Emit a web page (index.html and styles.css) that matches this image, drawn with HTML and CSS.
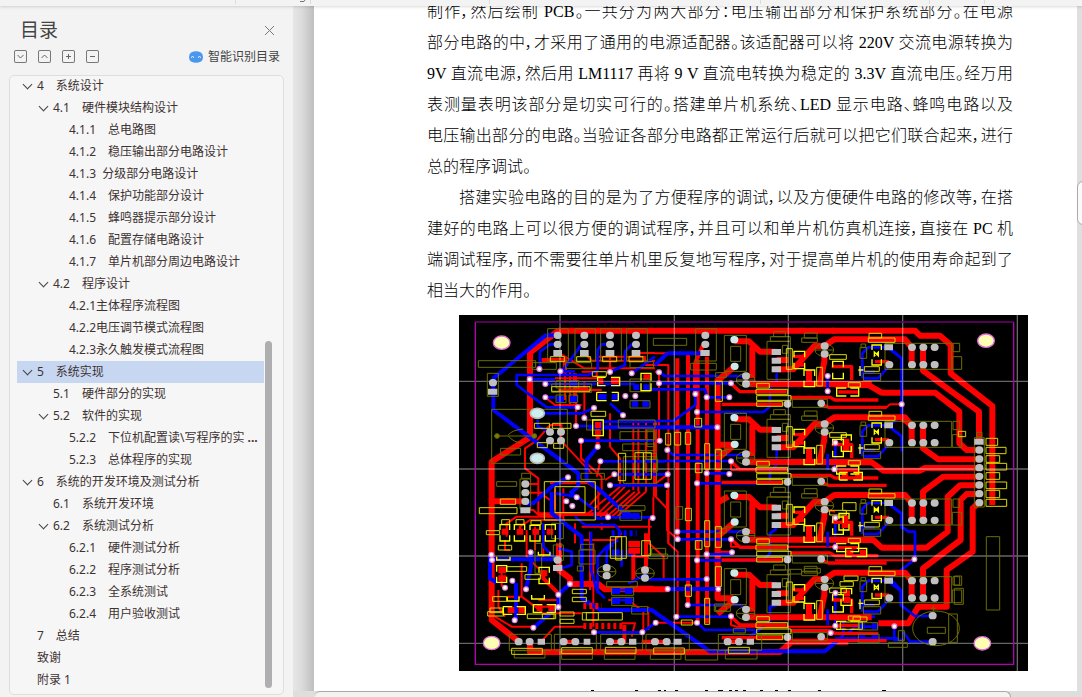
FILE: index.html
```html
<!DOCTYPE html>
<html lang="zh-CN">
<head>
    <meta charset="UTF-8">
    <meta name="viewport" content="width=device-width, initial-scale=1.0">
    <title>目录</title>
    <link rel="stylesheet" href="styles.css">
</head>
<body>

<div class="topbar">
    <svg width="1082" height="6" viewBox="0 0 1082 6">
        <path d="M235.5 0v4M310.5 0v4M489.5 0v4M760.5 0v4M929.5 0v4M984.5 0v4" stroke="#dcdcdc"/>
        <path d="M300 1.500h4l1-1.500" stroke="#777" fill="none"/>
    </svg>
</div>

<div class="workspace">
    <aside class="sidebar">
        <header class="sidebar-head">
            <h1>目录</h1>
            <button class="close" aria-label="关闭">
                <svg width="11" height="11" viewBox="0 0 11 11"><path d="M1 1l9 9M10 1l-9 9"/></svg>
            </button>
        </header>
        <div class="tools">
            <button aria-label="展开"><svg width="13" height="13" viewBox="0 0 13 13"><path d="M3.500 5l3 3 3-3"/></svg></button>
            <button aria-label="收起"><svg width="13" height="13" viewBox="0 0 13 13"><path d="M3.500 8l3-3 3 3"/></svg></button>
            <button aria-label="增加"><svg width="13" height="13" viewBox="0 0 13 13"><path d="M4 6.500h5M6.500 4v5"/></svg></button>
            <button aria-label="减少"><svg width="13" height="13" viewBox="0 0 13 13"><path d="M4 6.500h5"/></svg></button>
            <a class="smart" href="#">
                <svg width="14" height="12" viewBox="0 0 14 12">
                    <path d="M2 1.500Q7-1 12 1.500Q14 3 14 6T12 10.500Q7 13 2 10.500Q0 9 0 6T2 1.500z" fill="#4a97f0"/>
                    <path d="M2 6.500q1.500-2 3 0M9 6.500q1.500-2 3 0" stroke="#fff" fill="none"/>
                </svg>
                智能识别目录
            </a>
        </div>
        <nav class="tree">
            <ul>
                <li class="l1 open"><a href="#">4　系统设计</a></li>
                <li class="l2 open"><a href="#">4.1　硬件模块结构设计</a></li>
                <li class="l3"><a href="#">4.1.1　总电路图</a></li>
                <li class="l3"><a href="#">4.1.2　稳压输出部分电路设计</a></li>
                <li class="l3"><a href="#">4.1.3  分级部分电路设计</a></li>
                <li class="l3"><a href="#">4.1.4　保护功能部分设计</a></li>
                <li class="l3"><a href="#">4.1.5　蜂鸣器提示部分设计</a></li>
                <li class="l3"><a href="#">4.1.6　配置存储电路设计</a></li>
                <li class="l3"><a href="#">4.1.7　单片机部分周边电路设计</a></li>
                <li class="l2 open"><a href="#">4.2　程序设计</a></li>
                <li class="l3"><a href="#">4.2.1主体程序流程图</a></li>
                <li class="l3"><a href="#">4.2.2电压调节模式流程图</a></li>
                <li class="l3"><a href="#">4.2.3永久触发模式流程图</a></li>
                <li class="l1 open active"><a href="#">5　系统实现</a></li>
                <li class="l2"><a href="#">5.1　硬件部分的实现</a></li>
                <li class="l2 open"><a href="#">5.2　软件的实现</a></li>
                <li class="l3"><a href="#">5.2.2　下位机配置读\写程序的实 <b>...</b></a></li>
                <li class="l3"><a href="#">5.2.3　总体程序的实现</a></li>
                <li class="l1 open"><a href="#">6　系统的开发环境及测试分析</a></li>
                <li class="l2"><a href="#">6.1　系统开发环境</a></li>
                <li class="l2 open"><a href="#">6.2　系统测试分析</a></li>
                <li class="l3"><a href="#">6.2.1　硬件测试分析</a></li>
                <li class="l3"><a href="#">6.2.2　程序测试分析</a></li>
                <li class="l3"><a href="#">6.2.3　全系统测试</a></li>
                <li class="l3"><a href="#">6.2.4　用户验收测试</a></li>
                <li class="l1"><a href="#">7　总结</a></li>
                <li class="l1"><a href="#">致谢</a></li>
                <li class="l1"><a href="#">附录 1</a></li>
            </ul>
            <div class="scrollbar"></div>
        </nav>
    </aside>

    <div class="viewer">
        <div class="canvas">
            <div class="gutter"></div>
            <main class="page">
                <p>
                    <span>制作，然后绘制 PCB。一共分为两大部分：电压输出部分和保护系统部分。在电源</span>
                    <span>部分电路的中，才采用了通用的电源适配器。该适配器可以将 220V 交流电源转换为</span>
                    <span>9V 直流电源，然后用 LM1117 再将 9 V 直流电转换为稳定的 3.3V 直流电压。经万用</span>
                    <span>表测量表明该部分是切实可行的。搭建单片机系统、LED 显示电路、蜂鸣电路以及</span>
                    <span>电压输出部分的电路。当验证各部分电路都正常运行后就可以把它们联合起来，进行</span>
                    <span class="last">总的程序调试。</span>
                </p>
                <p>
                    <span class="indent">搭建实验电路的目的是为了方便程序的调试，以及方便硬件电路的修改等，在搭</span>
                    <span>建好的电路上可以很方便的调试程序，并且可以和单片机仿真机连接，直接在 PC 机</span>
                    <span>端调试程序，而不需要往单片机里反复地写程序，对于提高单片机的使用寿命起到了</span>
                    <span class="last">相当大的作用。</span>
                </p>

                <svg class="pcb" width="569" height="356" viewBox="12 15 1707 1068">
                    <defs>
                        <!-- one output channel, repeated four times down the board -->
                        <g id="channel">
                            <g class="red">
                                <path class="w18" d="M268 94H312L345 125H395M322 110V205M268 170L218 212M300 222H680M395 150H430M395 178H445L508 108H538L568 88H780L800 112M492 180V225M538 132V155L524 222M800 112V164M834 112V164"/>
                                <path class="w10" d="M260 222L285 245H425M230 283H415M436 262H555L570 270H700M528 282L550 292H725M445 140H480M450 165H480M690 155H732M560 170H620V210M580 246H640"/>
                            </g>
                            <path class="blue w8" d="M548 198V245M652 205V130L670 112H728L770 145V190M655 205H700L732 168M640 185H690"/>
                            <g class="olive">
                                <path d="M238 76h66v108h-66zM257 109h30v45h-30zM366 94h70v114h-70zM376 80h60v14h-60zM386 65h35v15h-35zM470 84h47v13h-47zM478 69h38v15h-38zM442 268h105v24h-105zM212 188h32v14h-32zM720 100h200v78h-200zM924 100h20v25h-20zM922 140h28v38h-28zM645 113h20v32h-20zM655 190h52v22h-52zM648 102h14v10h-14zM412 106h16v24h-16z"/>
                                <ellipse cx="302" cy="210" rx="28" ry="19"/>
                                <ellipse cx="538" cy="120" rx="28" ry="19"/>
                                <path d="M274 210h56M510 120h56"/>
                            </g>
                            <path class="yellow" d="M424 116h18v62h-18zM515 172h17v56h-17zM335 220h38v14h-38zM333 238h95v15h-95zM335 257h103v14h-103zM335 275h78v14h-78zM670 84h80v13h-80zM672 70h38v14h-38zM610 218h36v13h-36zM554 134h50v14h-50zM658 170h45v14h-45z"/>
                            <path class="yellow bold" d="M447 142v-18h32v18M447 158v18h32v-18M477 198v-18h32v18M477 212v18h32v-18M563 172v-18h32v18M563 188v18h32v-18M604 234h-29v24h29M616 234h25v24h-25M681 120v-15h28v15M681 148v17h28v-17M688 126l12 12v-12l-12 12zM645 168v30M640 180h15"/>
                            <path class="pad" d="M302 198h2M302 222h2M427 282h1M528 280h1M538 108h2M538 132h2M732 164h2M800 112h2M834 112h2M868 112h2M800 164h2M834 164h2M868 164h2"/>
                            <path class="sq" d="M380 126h28M380 152h28M380 178h28M718 112h26"/>
                            <path class="pad ice" d="M267 89h2M268 169h2"/>
                        </g>
                        <path id="vias" d="M253 177h.1M316 184h.1M224 208h.1M271 222h.1M271 262h.1M368 292h.1M417 294h.1M388 324h.1M363 348h.1M504 316h.1M465 186h.1M530 190h.1M511 258h.1M541 258h.1M378 392h.1M428 410h.1M436 454h.1M478 493h.1M465 526h.1M339 502h.1M365 562h.1
                            M612 187h.1M612 220h.1M828 220h.1M721 252h.1M755 262h.1M823 262h.1M726 306h.1M787 352h.1M614 392h.1M637 420h.1M828 454h.1M755 490h.1M823 492h.1M726 520h.1M638 493h.1M636 526h.1M1118 198h.1M1118 244h.1M1141 398h.1M1138 478h.1M1340 283h.1
                            M667 665h.1M668 688h.1M828 688h.1M755 733h.1M831 727h.1M726 751h.1M755 807h.1M638 837h.1M790 837h.1M698 885h.1M664 920h.1M828 919h.1M602 938h.1M726 938h.1M1141 624h.1M1141 711h.1M1141 849h.1M1141 947h.1M1127 969h.1M1378 748h.1M1318 949h.1
                            M109 734h.1M111 750h.1M227 727h.1M172 812h.1M150 833h.1M213 838h.1M345 822h.1M310 854h.1M310 891h.1M179 931h.1M235 953h.1M417 967h.1M562 967h.1M459 622h.1M593 624h.1M334 574h.1M352 588h.1"/>
                    </defs>

                    <rect x="12" y="15" width="1707" height="1068" fill="#000"/>

                    <!-- main supply traces -->
                    <g class="red w18">
                        <path d="M1140 62H310L225 128V382L110 455V930L188 992M225 995V1026H975L1010 995H1180"/>
                        <path d="M1130 62H1380L1395 77H1455L1487 105V190L1612 288V585M1404 164V182L1572 305V395M1140 225H1240L1280 248H1440L1513 305V400L1535 420H1572M1340 322L1370 346M1404 398V415L1450 448H1572M1140 457H1250L1285 482H1395L1410 474H1572M1572 500H1465L1404 545V620M1572 526H1515L1478 560V665L1415 713H1280L1255 690H1140"/>
                        <path d="M1572 552H1535L1517 570V690L1404 775V865M1572 578L1553 595V725L1475 780V890H1390L1360 940H1270"/>
                        <path d="M788 205V865H835M345 822H430L450 838H640M787 404H840M787 578L820 560M312 700V780L345 805V822M110 574H210"/>
                    </g>
                    <g class="red w12">
                        <path d="M667 145V690M699 135V885M728 150V938M756 140V940M720 160V250M720 160L745 103M573 670V780M535 730V810M428 340V410M508 945V995H465M325 995H360M560 995H635M820 995H850M265 780V805L310 850M600 330V560M260 150H330V190M360 190V280"/>
                    </g>
                    <g class="red w6">
                        <path d="M310 128L388 175H600M388 129L410 152H600M543 129H600M465 129V180M425 140H570V165H640V700M600 130H640M600 185L612 187V390M345 185V285M330 190V270M300 205H430M380 185H425V205M310 240H440M270 262L300 285H380M363 348V235H400M388 324V215M465 310V410L495 445V530M535 330V540M550 330V545M573 330V545M378 392V445L440 500V545L400 590M245 392L285 345H320L318 392L410 490M245 392L210 415V475L250 505V545L285 570M210 522H250V610H460M210 548H270M210 600H235L250 615H460"/>
                        <path d="M495 530L400 610M510 530L420 620M525 540L435 620M540 545L450 625M555 545L465 625M573 545L480 625M285 520H420M300 535V600M325 535V640M595 560V620M400 520L430 540V600M436 454L425 500M478 493L450 510M638 493L602 520V560L640 600V700L668 725V920M636 540V660L668 688M582 620V700L626 740V805"/>
                        <path d="M155 680V640L185 620H320M195 670V650L225 630H330M215 660V740L250 775M240 650V720M265 650V740M120 920L170 950H235M300 890H240M250 870H310M262 910H380M258 995L300 950H390M150 690V720H165M380 690H480L500 670M405 665V840M380 650H590M460 870H520L565 905V965M580 890V960M500 940H540L530 980M525 830H595M470 850L490 830M360 640V700M415 700V950M440 640V660M540 740H580M602 938H726M577 837H640M790 725H835M780 750H980M828 480H1000M828 690V710H1140M828 920V945L845 950H1160M828 455V480M200 760V860L260 905M140 780V830M130 840V890L150 920M155 860H200M1140 292H1295L1305 283H1340M1140 751H1375M1140 605L1120 600"/>
                    </g>

                    <!-- signal traces on the other side -->
                    <g class="blue w12">
                        <path d="M308 76H272L115 205V300L370 490V530L345 550M428 410L395 450V510L440 545L500 600L545 625M339 502L290 530L235 580H210M290 545V610L380 680V865L435 900H590L765 1024H1110L1155 985M105 735V805L125 818M105 748H305M228 727V770L213 837M183 820V930M235 953L310 890V853L345 822M638 837H790M400 352H787M637 130H745M600 165L637 130"/>
                    </g>
                    <g class="blue w8">
                        <path d="M308 103H285L255 125V177M388 103H380L350 145L320 184M465 103H440L428 120V180L400 195H185V225L275 292H368M543 103H530L510 125V165L465 186M530 190L600 140M224 208H300M271 222H540M316 184H360M248 310H380L417 294M248 330V350L285 365M363 348H440V335H600M378 392H600M465 280L504 316M436 454H630M478 493H638M465 526H636M271 262H300"/>
                        <path d="M612 187L630 198H870M612 220H828M570 238H750L756 262H823M721 252V285L655 333H570M965 190V215L945 235V290L925 306H726M637 420L655 435H870M570 453H828M965 420V465L945 485V520H726M755 490H823M667 665H870M667 688H828M756 733H830M965 655L945 670V730L925 751H726M570 808H755M699 885H855L870 897M663 920H828M727 938L750 960H900M965 885L945 890V935L885 980V995M1141 398V478M1141 624V711M1141 849V947"/>
                        <path d="M1300 112L1340 145V320L1300 346M1302 582L1340 610V650L1360 665H1380V748L1305 805L1337 840V885L1380 918H1433M1318 949V990H1345M1345 965L1365 995H1433M1140 985H1330M1140 1000L1165 975V920H1260M1130 969H1180L1200 950H1250"/>
                        <path d="M310 715L350 725V765L320 775M345 545L420 600V625H460M459 622H593M360 620L390 645H480L500 670M455 770V720L475 705M428 850V740L455 710L490 690M408 665V780L425 840L450 865M470 840H535M470 870H535M418 967H562L602 938M500 720V770M520 820L580 790M172 812L183 825M300 550L365 560M265 640V710L305 750M315 640V690"/>
                    </g>
                    <path class="blue w18" d="M305 267h22M345 267h22M430 260h25M470 260h22M530 282h20M562 282h20M500 618h24M532 618h22M470 843h25M510 843h22M470 873h25M510 873h22M535 232h18M565 232h18M470 727h24M515 727h20M1210 949h20M1250 949h20M1210 985h20M1250 985h20M345 220h20"/>
                    <path class="red w18" d="M140 665h20M185 665h20M232 665h20M275 665h20M130 780h24M130 805h24M158 900h20M190 900h20M245 894h18M280 894h18M468 213h24M430 213h15M565 202h20M420 345h18M420 370h18M255 790h22M520 702h35M520 722h35M1163 395h20M1163 415h20M1160 498h20M1200 498h20M1160 625h20M1160 645h20M1175 728h20M1215 728h20M1165 850h20M1165 870h20"/>
                    <path class="red w18" stroke-dasharray="9 9" d="M385 888H440M385 948H510"/>
                    <path class="blue w18" stroke-dasharray="9 9" d="M470 670H545"/>

                    <g transform="translate(570)">
                        <use href="#channel"/>
                        <use href="#channel" y="234"/>
                        <use href="#channel" y="467"/>
                        <use href="#channel" y="700"/>
                    </g>

                    <!-- grid and board outline -->
                    <path class="grid" d="M315 15V1083M658 15V1083M1000 15V1083M1343 15V1083M1687 15V1083M12 214H1719M12 477H1719M12 738H1719M12 1000H1719"/>
                    <path d="M61 36H1676" stroke="#700070" stroke-width="5"/>
                    <path d="M61 36V1063H1676V36" stroke="#b400b4" stroke-width="4" fill="none"/>

                    <!-- silkscreen -->
                    <g class="olive">
                        <path d="M278 56h62v97h-62zM360 56h62v97h-62zM437 56h62v97h-62zM515 56h62v97h-62zM70 152h172v20h-172zM97 190h33v69h-33zM110 298h227v162h-227zM137 415h60v20h-60zM195 507h32v90h-32zM125 515h60v14h-60zM200 490h27v15h-27zM232 158h72v20h-72zM332 158h78v18h-78zM290 222h120v25h-120zM303 212h68v22h-68zM303 255h30v23h-30zM342 255h26v23h-26zM525 272h60v22h-60zM395 330h50v30h-50zM525 155h70v18h-70zM378 490h70v18h-70zM490 330h110v24h-110zM495 365h105v24h-105zM503 402h97v20h-97zM505 440h100v80h-100zM525 207h60v38h-60zM595 85h100v21h-100zM722 56h62v97h-62zM707 160h77v20h-77zM576 360h20v50h-20zM573 430h32v18h-32zM570 448h38v35h-38z"/>
                        <path d="M490 587h80v14h-80zM495 605h65v26h-65zM372 720h48v42h-48zM377 703h38v15h-38zM367 768h18v15h-18zM470 832h66v24h-66zM470 862h66v24h-66zM455 815h92v16h-92zM530 890h48v22h-48zM290 640h35v46h-35zM295 705h30v46h-30zM240 700h20v90h-20zM163 973h126v48h-126zM178 1022h92v22h-92zM298 973h126v48h-126zM320 1018h92v30h-92zM437 973h126v48h-126zM448 1022h92v26h-92zM573 973h130v48h-130zM586 1022h92v26h-92zM790 973h130v48h-130zM811 1020h95v27h-95zM691 1020h97v30h-97zM663 590h20v38h-20zM590 715h42v20h-42zM580 732h58v14h-58zM778 882h48v22h-48zM998 778h42v14h-42zM1048 775h48v14h-48zM835 955h36v14h-36z"/>
                        <path d="M1594 680h40v220h-40zM1417 952h54v18h-54zM1481 912h26v85h-26zM1498 798h22v28h-22zM1498 835h27v48h-27zM1558 383h30v208h-30zM1210 938h58v22h-58zM1210 972h62v26h-62zM1300 997h57v15h-57zM1330 962h18v30h-18zM1565 367h16v14h-16z"/>
                        <ellipse cx="1443" cy="955" rx="70" ry="52"/>
                        <ellipse cx="455" cy="785" rx="28" ry="19"/>
                        <ellipse cx="570" cy="790" rx="28" ry="19"/>
                        <path d="M126 378h115M160 375q10-15 45-18M160 378q15 20 42 20M427 785h56M542 790h56M1427 895h16M1435 887v16"/>
                        <circle cx="126" cy="378" r="7" fill="#7c7c00"/>
                        <circle cx="238" cy="378" r="7" fill="#7c7c00"/>
                    </g>
                    <path class="yellow" d="M286 140h42v15h-42zM365 140h42v15h-42zM443 140h42v15h-42zM522 140h42v15h-42zM238 340h46v15h-46zM292 340h56v15h-56zM247 398h30v15h-30zM296 400h30v15h-30zM408 304h44v15h-44zM290 230h115v14h-115zM268 515h153v115h-153zM300 530h90v78h-90zM490 430h22v82h-22zM540 428h26v80h-26zM565 428h24v80h-24zM412 185h42v14h-42zM136 567h46v16h-46zM73 593h113v18h-113zM94 662h40v12h-40zM140 629h24v14h-24zM183 629h24v14h-24zM228 632h30v12h-30zM130 706h40v14h-40zM155 770h60v14h-60zM210 794h46v14h-46zM113 860h42v14h-42zM105 894h38v14h-38zM98 905h48v13h-48zM217 912h80v14h-80zM262 912h40v14h-40zM352 838h42v13h-42zM352 862h42v13h-42zM315 906h42v12h-42zM315 928h42v12h-42zM382 908h120v22h-120zM394 908h36v22h-36zM466 680h48v65h-48zM482 680h18v70h-18zM170 1015h92v18h-92zM320 1013h92v18h-92zM451 1012h92v18h-92zM596 1014h92v18h-92zM820 1012h63v18h-63zM560 692h26v45h-26z"/>
                    <path class="yellow" d="M719 325h21v26h-21zM632 370h15v35h-15zM659 367h18v38h-18zM691 367h16v36h-16zM749 401h15v77h-15zM781 418h18v60h-18zM781 214h21v60h-21zM721 460h20v28h-20zM691 595h18v37h-18zM749 632h15v78h-15zM781 650h18v62h-18zM721 692h20v26h-20zM781 770h18v60h-18zM691 825h18v34h-18zM749 865h15v78h-15zM679 930h33v15h-33zM1593 385h35v21h-35zM1593 412h60v19h-60zM1593 437h41v20h-41zM1593 460h62v20h-62zM1593 488h41v20h-41zM1593 516h62v20h-62zM1593 541h41v22h-41zM1593 568h62v21h-62zM1510 364h22v16h-22zM1194 921h42v13h-42zM1156 936h66v22h-66zM1167 798h42v14h-42zM1155 815h40v14h-40zM1163 578h40v24h-40z"/>
                    <path class="yellow bold" d="M428 213v-11h24M468 202h26v25h-26M428 216v11h24M425 247h30M425 272h30M425 247v25M490 247v25M470 247h20M470 272h20M413 355v-25h32v25M413 352v25h32v-25M558 212v-22h30v22M558 220v22h30v-22M135 660v-16h29v16M135 676v17h29v-17M178 660v-16h31v16M178 676v17h31v-17M225 660v-14h30v14M225 676v17h30v-17M271 660v-16h30v16M271 676v17h30v-17M125 785v-18h30v18M125 800v17h30v-17M252 788v-16h31v16M252 803v18h31v-18M172 890h-27v23h27M185 890h26v23h-26M262 884h-27v23h27M275 884h26v23h-26M125 740v10h40v-10M230 855v12h38v-12M157 860v13h35v-13M250 725v10h35v-10M1159 392v-17h30v17M1159 408v16h30v-16M1153 487h25M1153 510h25M1153 487v23M1195 487h27v23h-27M1152 628v-18h30v18M1152 642v18h30v-18M1190 715h-18v25h18M1205 715h30v25h-30M1158 853v-17h32v17M1158 868v18h32v-18"/>

                    <!-- pads, vias and mounting holes -->
                    <path class="pad" d="M307 76h2M307 103h2M387 76h2M387 103h2M464 76h2M464 103h2M542 76h2M542 103h2M750 76h2M750 103h2M113 218h2M284 366h2M317 366h2M284 392h2M317 392h2M210 522h2M210 548h2M210 574h2M307 750h2M454 773h2M454 797h2M569 780h2M569 804h2M190 995h2M223 995h2M325 995h2M360 995h2M464 995h2M498 995h2M599 995h2M634 995h2M817 995h2M851 995h2M1432 917h2M1432 995h2M1572 420h2M1572 447h2M1572 473h2M1572 499h2M1572 525h2M1572 551h2M1572 578h2"/>
                    <path class="sq" d="M295 129h26M375 129h26M452 129h26M530 129h26M736 129h28M99 245h28M196 601h30M294 774h28M248 995h22M386 995h20M522 995h22M656 995h24M875 995h22M1558 395h28"/>
                    <g fill="#cdeeee" stroke="#bbb" stroke-width="5">
                        <ellipse cx="247" cy="310" rx="21" ry="15"/>
                        <ellipse cx="247" cy="445" rx="21" ry="15"/>
                    </g>
                    <use href="#vias" class="via"/>
                    <use href="#vias" class="via-core"/>
                    <g fill="#ffffb4" stroke="#e070d8" stroke-width="4">
                        <ellipse cx="140" cy="98" rx="25" ry="20"/>
                        <ellipse cx="1593" cy="92" rx="25" ry="20"/>
                        <ellipse cx="110" cy="999" rx="25" ry="20"/>
                        <ellipse cx="1582" cy="1000" rx="25" ry="20"/>
                    </g>
                </svg>

                <!-- tops of the next line, cut off by the lower edge -->
                <svg class="cutoff" width="586" height="1" viewBox="0 0 586 1">
                    <path d="M164 .5h3M208 .5h3M231 .5h3M237 .5h2M248 .5h3M278 .5h3M291 .5h5M302 .5h3M308 .5h3M316 .5h3M333 .5h3M348 .5h3M361 .5h3M391 .5h3M455 .5h4" stroke="#000"/>
                </svg>
            </main>
            <div class="rail">
                <button class="handle" aria-label="展开侧栏"></button>
            </div>
        </div>
        <footer class="bottom"><div class="tab"></div></footer>
    </div>
</div>

</body>
</html>
```
FILE: styles.css
```css
* {
    box-sizing: border-box;
}

body {
    margin: 0;
    height: 100vh;
    display: flex;
    flex-direction: column;
    overflow: hidden;
    background-color: #f3f3f3;
    font-family: "Noto Sans", "Noto Sans CJK SC", sans-serif;
    font-size: 12px;
    color: #3d3332;
}

button {
    padding: 0;
    border: none;
    background: none;
    cursor: pointer;
}

a {
    color: inherit;
    text-decoration: none;
}

svg {
    display: block;
}

.topbar {
    height: 6px;
    flex: none;
    overflow: hidden;
    position: relative;
    z-index: 1;
    background-color: #f3f3f3;
    box-shadow: 0 1px 3px rgba(0, 0, 0, 0.15);
}

.workspace {
    flex: 1;
    min-height: 0;
    display: flex;
}

/* Sidebar */
.sidebar {
    width: 293px;
    flex: none;
    display: flex;
    flex-direction: column;
    padding: 10px 9px 2px;
}

.sidebar-head {
    display: flex;
    justify-content: space-between;
    align-items: center;
    height: 28px;
    padding: 0 9px 0 11px;
}

.sidebar-head h1 {
    margin: 0;
    font-size: 19px;
    line-height: 28px;
    font-weight: normal;
    color: #444;
}

.close svg {
    fill: none;
    stroke: #777;
}

.tools {
    display: flex;
    align-items: center;
    gap: 11px;
    height: 25px;
    padding: 0 4px 0 5px;
}

.tools button {
    width: 13px;
    height: 13px;
    border-radius: 2px;
    box-shadow: inset 0 0 0 1px #777;
}

.tools button svg {
    fill: none;
    stroke: #666;
}

.smart {
    display: flex;
    align-items: center;
    gap: 5px;
    margin-left: auto;
    line-height: 18px;
    color: #444;
}

.tree {
    flex: 1;
    min-height: 0;
    display: flex;
    margin-top: 6px;
    padding-left: 7px;
    border: 1px solid #dedede;
    border-radius: 5px;
    background-color: #f6f6f6;
}

.tree ul {
    width: 247px;
    margin: -1px 0 0;
    padding: 0;
    list-style: none;
}

.tree li {
    position: relative;
    height: 22px;
    line-height: 22px;
    white-space: pre;
}

.l1 {
    padding-left: 20px;
}

.l2 {
    padding-left: 36px;
}

.l3 {
    padding-left: 52px;
}

/* arrow in front of an open branch */
.open::before {
    content: "";
    position: absolute;
    top: 6px;
    left: 7px;
    width: 6px;
    height: 6px;
    border: solid #444;
    border-width: 0 1px 1px 0;
    transform: rotate(45deg);
}

.l2.open::before {
    left: 23px;
}

.active {
    background-color: #c7d7f1;
}

.scrollbar {
    width: 7px;
    margin: 265px 0 6px 1px;
    border-radius: 4px;
    background-color: #afafb1;
}

/* Document */
.viewer {
    flex: 1;
    min-width: 0;
    display: flex;
    flex-direction: column;
}

.canvas {
    flex: 1;
    min-height: 0;
    display: flex;
}

.gutter {
    width: 21px;
    flex: none;
    background: linear-gradient(to right, #e6e6e6, #dcdcdc 40%, #bebebe);
}

.page {
    flex: 1;
    min-width: 0;
    display: flex;
    flex-direction: column;
    overflow: hidden;
    padding: 0 64px 0 113px;
    background-color: #fff;
    color: #000;
    font-family: "Liberation Serif", "Noto Sans CJK SC Light", "Noto Sans CJK SC", serif;
    font-size: 16px;
    line-height: 31px;
    /* lets the punctuation give way so that full lines fit the measure */
    font-feature-settings: "palt";
}

.page p {
    margin: 0;
}

.page p:first-child {
    margin-top: -10px;
}

.page span {
    display: block;
    height: 31px;
    white-space: nowrap;
    text-align: justify;
    text-align-last: justify;
}

.page .last {
    text-align-last: left;
}

.page .indent {
    padding-left: 32px;
}

.rail {
    width: 5px;
    flex: none;
    overflow: hidden;
    padding-top: 175px;
    background-color: #dfdfdf;
}

.handle {
    display: block;
    width: 16px;
    height: 44px;
    border: 1px solid #aaa;
    border-radius: 6px;
    background-color: #fafafa;
}

.bottom {
    height: 6px;
    flex: none;
    padding: 0 71px 0 22px;
    background-color: #dedede;
}

.tab {
    height: 6px;
    border-top: 1px solid #a8a8a8;
    border-right: 1px solid #a8a8a8;
    border-radius: 5px 6px 0 0;
    background-color: #f3f3f3;
}

/* Circuit board */
.pcb {
    flex: none;
    margin: 9px 0 0 32px;
}

.cutoff {
    flex: none;
    margin-top: 19px;
}

.red,
.blue,
.olive,
.yellow,
.pad,
.sq,
.grid {
    fill: none;
}

.red {
    stroke: #f00;
    stroke-linejoin: round;
}

.blue {
    stroke: #00f;
    stroke-linejoin: round;
}

.w18 {
    stroke-width: 18px;
}

.w12 {
    stroke-width: 12px;
}

.w10 {
    stroke-width: 10px;
}

.w8 {
    stroke-width: 8px;
}

.w6 {
    stroke-width: 6px;
}

.olive {
    stroke: #6c6c00;
    stroke-width: 3px;
}

.yellow {
    stroke: #d8d800;
    stroke-width: 3px;
}

.bold {
    stroke: #ff0;
    stroke-width: 4px;
}

.grid {
    stroke: #fff;
    stroke-opacity: 0.4;
    stroke-width: 4px;
}

.pad {
    stroke: #c0c0c0;
    stroke-width: 22px;
    stroke-linecap: round;
}

.ice {
    stroke: #cdeaea;
}

.sq {
    stroke: #c0c0c0;
    stroke-width: 18px;
}

.via {
    stroke: #e080e0;
    stroke-width: 18px;
    stroke-linecap: round;
}

.via-core {
    stroke: #ffffe0;
    stroke-width: 11px;
    stroke-linecap: round;
}
```
